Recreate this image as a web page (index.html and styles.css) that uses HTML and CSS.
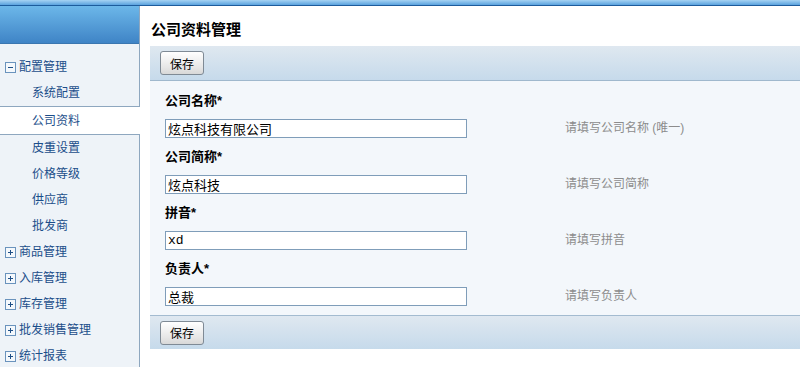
FILE: index.html
```html
<!DOCTYPE html>
<html lang="zh-CN">
<head>
<meta charset="utf-8">
<title>公司资料管理</title>
<link rel="stylesheet" href="styles.css">
</head>
<body>
<div class="topbar"></div>
<div class="layout">
  <aside class="sidebar">
    <div class="side-head"></div>
    <ul class="menu">
      <li class="group"><svg class="toggle" viewBox="0 0 11 11" width="11" height="11"><rect x="0.5" y="0.5" width="10" height="10" fill="#f4f8fc" stroke="#6a93bd"/><path d="M3 5.5h5" stroke="#1f4f86" stroke-width="1"/></svg>配置管理</li>
      <li class="sub">系统配置</li>
      <li class="sub active">公司资料</li>
      <li class="sub">皮重设置</li>
      <li class="sub">价格等级</li>
      <li class="sub">供应商</li>
      <li class="sub">批发商</li>
      <li class="group"><svg class="toggle" viewBox="0 0 11 11" width="11" height="11"><rect x="0.5" y="0.5" width="10" height="10" fill="#f4f8fc" stroke="#6a93bd"/><path d="M3 5.5h5M5.5 3v5" stroke="#1f4f86" stroke-width="1"/></svg>商品管理</li>
      <li class="group"><svg class="toggle" viewBox="0 0 11 11" width="11" height="11"><rect x="0.5" y="0.5" width="10" height="10" fill="#f4f8fc" stroke="#6a93bd"/><path d="M3 5.5h5M5.5 3v5" stroke="#1f4f86" stroke-width="1"/></svg>入库管理</li>
      <li class="group"><svg class="toggle" viewBox="0 0 11 11" width="11" height="11"><rect x="0.5" y="0.5" width="10" height="10" fill="#f4f8fc" stroke="#6a93bd"/><path d="M3 5.5h5M5.5 3v5" stroke="#1f4f86" stroke-width="1"/></svg>库存管理</li>
      <li class="group"><svg class="toggle" viewBox="0 0 11 11" width="11" height="11"><rect x="0.5" y="0.5" width="10" height="10" fill="#f4f8fc" stroke="#6a93bd"/><path d="M3 5.5h5M5.5 3v5" stroke="#1f4f86" stroke-width="1"/></svg>批发销售管理</li>
      <li class="group"><svg class="toggle" viewBox="0 0 11 11" width="11" height="11"><rect x="0.5" y="0.5" width="10" height="10" fill="#f4f8fc" stroke="#6a93bd"/><path d="M3 5.5h5M5.5 3v5" stroke="#1f4f86" stroke-width="1"/></svg>统计报表</li>
    </ul>
  </aside>
  <main class="main">
    <h1 class="title">公司资料管理</h1>
    <div class="toolbar"><button class="btn" type="button">保存</button></div>
    <form class="form">
      <div class="row">
        <div class="label">公司名称*</div>
        <div class="line"><input class="field" type="text" value="炫点科技有限公司"><span class="hint">请填写公司名称 (唯一)</span></div>
      </div>
      <div class="row">
        <div class="label">公司简称*</div>
        <div class="line"><input class="field" type="text" value="炫点科技"><span class="hint">请填写公司简称</span></div>
      </div>
      <div class="row">
        <div class="label">拼音*</div>
        <div class="line"><input class="field" type="text" value="xd"><span class="hint">请填写拼音</span></div>
      </div>
      <div class="row">
        <div class="label">负责人*</div>
        <div class="line"><input class="field" type="text" value="总裁"><span class="hint">请填写负责人</span></div>
      </div>
    </form>
    <div class="toolbar bottom"><button class="btn" type="button">保存</button></div>
  </main>
</div>
</body>
</html>
```
FILE: styles.css
```css
html, body {
  margin: 0;
  padding: 0;
}
body {
  width: 800px;
  height: 367px;
  overflow: hidden;
  background: #ffffff;
  font-family: "Liberation Sans", "Noto Sans CJK SC", sans-serif;
  font-size: 12px;
  color: #000;
}
.topbar {
  height: 5px;
  background: linear-gradient(#a6d3f3, #5aa2de);
  border-bottom: 1px solid #1d5c9c;
}
.layout {
  display: flex;
  height: 361px;
}
.sidebar {
  width: 139px;
  flex: 0 0 139px;
  background: #eef3f8;
  border-right: 1px solid #8ea7bf;
  overflow: visible;
}
.side-head {
  height: 37px;
  background: linear-gradient(#6cb7e9, #3f84c6);
  border-bottom: 1px solid #3a76b0;
}
.menu {
  list-style: none;
  margin: 0;
  padding: 10px 0 0 0;
}
.menu li {
  box-sizing: border-box;
  height: 26px;
  padding-top: 1px;
  line-height: 25px;
  display: flex;
  align-items: center;
  color: #1b4e8a;
  font-size: 12px;
  white-space: nowrap;
}
.menu .group {
  padding-left: 5px;
}
.menu .toggle {
  margin-right: 3px;
  flex: 0 0 11px;
}
.menu .sub {
  padding-left: 32px;
}
.menu .active {
  box-sizing: content-box;
  background: #ffffff;
  border-top: 1px solid #8ea7bf;
  border-bottom: 1px solid #8ea7bf;
  margin-right: -1px;
  position: relative;
}
.main {
  flex: 1;
  padding-left: 10px;
  background: #ffffff;
}
.title {
  margin: 0 0 5px 0;
  padding: 13px 0 0 1px;
  font-size: 15px;
  line-height: 22px;
  font-weight: bold;
  color: #000;
}
.toolbar {
  height: 34px;
  border-bottom: 1px solid #9fb8cd;
  background: linear-gradient(#dfe8f0, #c6daeb);
  display: flex;
  align-items: center;
  padding-left: 10px;
}
.toolbar.bottom {
  height: 33px;
  border-bottom: 0;
  border-top: 1px solid #a3bbd0;
}
.btn {
  width: 44px;
  height: 24px;
  padding: 0;
  border: 1px solid #7f8a95;
  border-radius: 3px;
  background: linear-gradient(#ffffff, #e6e6e6 70%, #d8d8d8);
  font-family: "Liberation Sans", "Noto Sans CJK SC", sans-serif;
  font-size: 12px;
  color: #000;
}
.form {
  margin: 0;
  background: #f3f7fb;
  padding: 1px 0 9px 15px;
}
.row {
  padding-top: 9px;
}
.label {
  height: 18px;
  line-height: 20px;
  margin-bottom: 10px;
  font-size: 13px;
  font-weight: bold;
}
.line {
  display: flex;
  align-items: center;
  height: 19px;
}
.field {
  box-sizing: border-box;
  width: 302px;
  height: 19px;
  margin: 0;
  padding: 0 2px;
  border: 1px solid #7f9db9;
  background: #fff;
  font-family: "Liberation Mono", "Noto Sans CJK SC", monospace;
  font-size: 13px;
  color: #000;
  outline: none;
}
.hint {
  margin-left: 98px;
  font-size: 12px;
  line-height: 19px;
  color: #8c8c8c;
}
```
